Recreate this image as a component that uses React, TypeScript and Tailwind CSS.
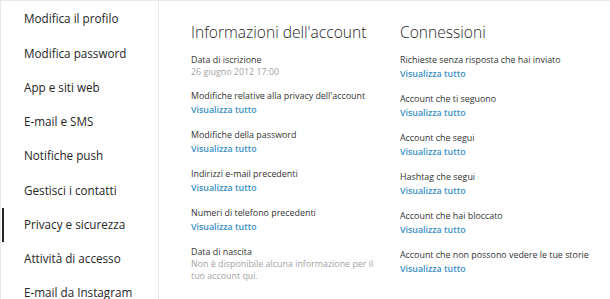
import React from "react";

type Item = {
  label: string;
  value?: string;
  link?: boolean;
};

const menu = [
  "Modifica il profilo",
  "Modifica password",
  "App e siti web",
  "E-mail e SMS",
  "Notifiche push",
  "Gestisci i contatti",
  "Privacy e sicurezza",
  "Attività di accesso",
  "E-mail da Instagram",
];

const account: Item[] = [
  { label: "Data di iscrizione", value: "26 giugno 2012 17:00" },
  { label: "Modifiche relative alla privacy dell'account", link: true },
  { label: "Modifiche della password", link: true },
  { label: "Indirizzi e-mail precedenti", link: true },
  { label: "Numeri di telefono precedenti", link: true },
  {
    label: "Data di nascita",
    value: "Non è disponibile alcuna informazione per il tuo account qui.",
  },
];

const connections: Item[] = [
  { label: "Richieste senza risposta che hai inviato", link: true },
  { label: "Account che ti seguono", link: true },
  { label: "Account che segui", link: true },
  { label: "Hashtag che segui", link: true },
  { label: "Account che hai bloccato", link: true },
  { label: "Account che non possono vedere le tue storie", link: true },
];

const Row = ({ label, value, link }: Item) => (
  <div className="flex flex-col">
    <span className="text-[8.9px] leading-[12px] text-[#333333] whitespace-nowrap">
      {label}
    </span>
    {value && (
      <span className="text-[8.9px] leading-[12px] text-[#a3a3a3] max-w-[188px]">
        {value}
      </span>
    )}
    {link && (
      <span className="text-[8.9px] leading-[15px] font-semibold text-[#3a8fc6]">
        Visualizza tutto
      </span>
    )}
  </div>
);

const Column = ({ title, items }: { title: string; items: Item[] }) => (
  <div className="w-[209px] shrink-0 flex flex-col">
    <h2 className="text-[15.6px] leading-[20px] font-light text-[#262626] mt-[21px] mb-[12px] whitespace-nowrap">
      {title}
    </h2>
    <div className="flex flex-col gap-[12px]">
      {items.map((it) => (
        <Row key={it.label} {...it} />
      ))}
    </div>
  </div>
);

export default function App() {
  return (
    <div
      className="w-[610px] h-[299px] overflow-hidden bg-white flex border-t border-l border-[#e8e8e8]"
      style={{ fontFamily: '"Open Sans", "Noto Sans", sans-serif' }}
    >
      <nav className="w-[158px] shrink-0 border-r border-[#e8e8e8] flex flex-col pt-[1px] pl-[1px]">
        {menu.map((m) => {
          const active = m === "Privacy e sicurezza";
          return (
            <div
              key={m}
              className={`h-[34.25px] shrink-0 flex items-center pl-[20px] border-l-2 text-[11.7px] text-[#262626] ${
                active ? "border-[#262626]" : "border-transparent"
              }`}
            >
              {m}
            </div>
          );
        })}
      </nav>
      <main className="flex pl-[32px]">
        <Column title="Informazioni dell'account" items={account} />
        <Column title="Connessioni" items={connections} />
      </main>
    </div>
  );
}
